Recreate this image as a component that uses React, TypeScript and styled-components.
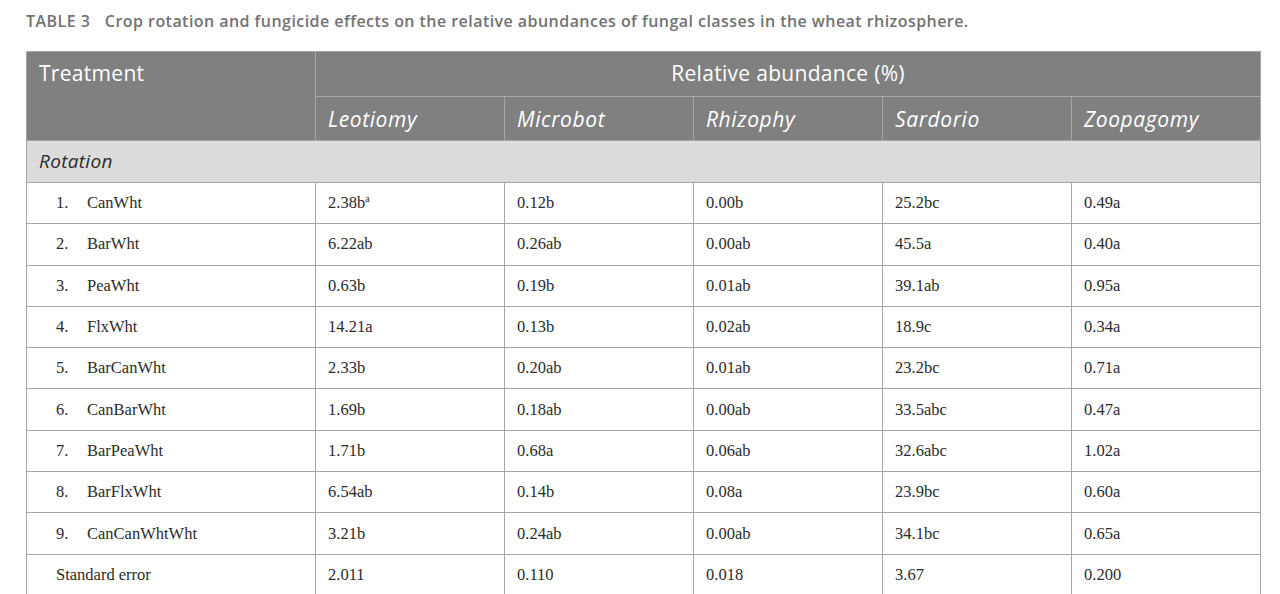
import * as React from 'react';
import styled, { createGlobalStyle } from 'styled-components';

const GlobalStyle = createGlobalStyle`
    html, body {
        margin: 0;
        padding: 0;
        background: #ffffff;
    }
`;

const Page = styled.div`
    padding: 10px 21px 0 26px;
`;

const Caption = styled.div`
    font-family: 'Open Sans', sans-serif;
    font-weight: 600;
    font-size: 16px;
    letter-spacing: 0.45px;
    color: #727272;
    height: 24px;
    line-height: 22px;
    margin-bottom: 17px;
    white-space: nowrap;
`;

const CaptionLabel = styled.span`
    margin-right: 10px;
`;

const Table = styled.table`
    border-collapse: collapse;
    width: 1233px;
    table-layout: fixed;
`;

const HeadCell = styled.th<{ $center?: boolean; $italic?: boolean }>`
    background: #808080;
    color: #ffffff;
    font-family: 'Open Sans', sans-serif;
    font-weight: 400;
    font-size: 21px;
    letter-spacing: ${(p) => (p.$italic ? '0.6px' : '0.3px')};
    font-style: ${(p) => (p.$italic ? 'italic' : 'normal')};
    text-align: ${(p) => (p.$center ? 'center' : 'left')};
    vertical-align: top;
    padding: 7px 12px 0 12px;
    border: 1px solid #a6a6a6;
    height: 37px;
`;

const SubHeadCell = styled(HeadCell)`
    padding-top: 8px;
    height: 35px;
`;

const SectionCell = styled.td`
    background: #dcdcdc;
    font-family: 'Open Sans', sans-serif;
    font-style: italic;
    font-size: 19px;
    letter-spacing: 0.3px;
    color: #2b2b2b;
    padding: 0 12px 1px 12px;
    height: 40px;
    border: 1px solid #a6a6a6;
`;

const Cell = styled.td<{ $first?: boolean }>`
    font-family: 'Liberation Serif', serif;
    font-size: 16.5px;
    color: #2b2b2b;
    padding: 0 12px 0 ${(p) => (p.$first ? '29px' : '12px')};
    height: 40.3px;
    border: 1px solid #a6a6a6;
`;

const Num = styled.span`
    display: inline-block;
    width: 31px;
`;

const Sup = styled.sup`
    font-size: 10px;
    line-height: 0;
`;

const Col = styled.col<{ $w: number }>`
    width: ${(p) => p.$w}px;
`;

const classes = ['Leotiomy', 'Microbot', 'Rhizophy', 'Sardorio', 'Zoopagomy'];

const rows: [string, string[]][] = [
    ['CanWht', ['2.38b', '0.12b', '0.00b', '25.2bc', '0.49a']],
    ['BarWht', ['6.22ab', '0.26ab', '0.00ab', '45.5a', '0.40a']],
    ['PeaWht', ['0.63b', '0.19b', '0.01ab', '39.1ab', '0.95a']],
    ['FlxWht', ['14.21a', '0.13b', '0.02ab', '18.9c', '0.34a']],
    ['BarCanWht', ['2.33b', '0.20ab', '0.01ab', '23.2bc', '0.71a']],
    ['CanBarWht', ['1.69b', '0.18ab', '0.00ab', '33.5abc', '0.47a']],
    ['BarPeaWht', ['1.71b', '0.68a', '0.06ab', '32.6abc', '1.02a']],
    ['BarFlxWht', ['6.54ab', '0.14b', '0.08a', '23.9bc', '0.60a']],
    ['CanCanWhtWht', ['3.21b', '0.24ab', '0.00ab', '34.1bc', '0.65a']],
];

const stdErr = ['2.011', '0.110', '0.018', '3.67', '0.200'];

export default function App() {
    return (
        <Page>
            <GlobalStyle />
            <Caption>
                <CaptionLabel>TABLE 3</CaptionLabel> Crop rotation and fungicide effects on the relative abundances of fungal classes in the wheat rhizosphere.
            </Caption>
            <Table>
                <colgroup>
                    <Col $w={289} />
                    {classes.map((c) => (
                        <Col key={c} $w={189} />
                    ))}
                </colgroup>
                <thead>
                    <tr>
                        <HeadCell rowSpan={2}>Treatment</HeadCell>
                        <HeadCell colSpan={5} $center>
                            Relative abundance (%)
                        </HeadCell>
                    </tr>
                    <tr>
                        {classes.map((c) => (
                            <SubHeadCell key={c} $italic>
                                {c}
                            </SubHeadCell>
                        ))}
                    </tr>
                </thead>
                <tbody>
                    <tr>
                        <SectionCell colSpan={6}>Rotation</SectionCell>
                    </tr>
                    {rows.map(([name, vals], i) => (
                        <tr key={name}>
                            <Cell $first>
                                <Num>{i + 1}.</Num>
                                {name}
                            </Cell>
                            {vals.map((v, j) => (
                                <Cell key={j}>
                                    {v}
                                    {i === 0 && j === 0 && <Sup>a</Sup>}
                                </Cell>
                            ))}
                        </tr>
                    ))}
                    <tr>
                        <Cell $first>Standard error</Cell>
                        {stdErr.map((v, j) => (
                            <Cell key={j}>{v}</Cell>
                        ))}
                    </tr>
                </tbody>
            </Table>
        </Page>
    );
}
